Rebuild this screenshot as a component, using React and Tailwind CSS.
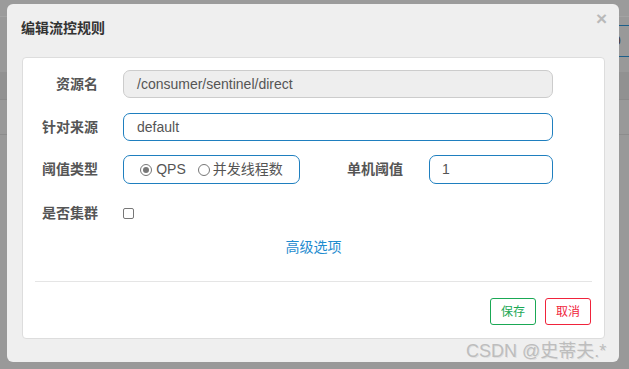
import React from "react";

const font = { fontFamily: '"Liberation Sans", "Noto Sans CJK SC", sans-serif' };

function Label({ children, className = "" }) {
  return (
    <div className={"text-right text-[14px] font-bold text-[#555] " + className}>{children}</div>
  );
}

export default function App() {
  return (
    <div className="relative w-[629px] h-[369px] overflow-hidden bg-[#999999]" style={font}>
      {/* page behind the overlay */}
      <div className="flex flex-col w-full h-full">
        <div className="h-[17px] border-b border-[#a3a3a3] bg-[#9b9b9b]" />
        <div className="h-[55px] flex justify-end">
          <div className="w-[10px] mt-[8px] h-[32px] border-y border-[#1d5f8a] flex items-center">
            <span className="text-[12px] text-[#333] -ml-[5px]">0</span>
          </div>
        </div>
        <div className="h-[28px] bg-[#919191] border-b border-[#8a8a8a]" />
        <div className="h-[35px] border-b border-[#8c8c8c]" />
      </div>

      {/* modal */}
      <div className="absolute left-[7px] top-[4px] w-[612px] h-[358px] rounded-[6px] bg-[#efefef] flex flex-col">
        <div className="h-[48px] flex items-center pl-[14px] mb-[5px]">
          <span className="text-[14px] font-bold text-[#333]">编辑流控规则</span>
        </div>
        <span className="absolute right-[12px] top-[5px] text-[19px] leading-none font-bold text-[#b9b9b9]">×</span>

        <div className="ml-[15px] mr-[14px] h-[282px] bg-white border border-[#dddddd] rounded-[4px] flex flex-col pt-[12px]">
          {/* row 1 */}
          <div className="flex items-center h-[28px]">
            <Label className="w-[75px]">资源名</Label>
            <div className="ml-[25px] w-[430px] h-[28px] rounded-[7px] border border-[#cccccc] bg-[#eeeeee] flex items-center pl-[13px] text-[14px] text-[#555]">
              /consumer/sentinel/direct
            </div>
          </div>
          {/* row 2 */}
          <div className="flex items-center h-[28px] mt-[15px]">
            <Label className="w-[75px]">针对来源</Label>
            <div className="ml-[25px] w-[430px] h-[28px] rounded-[7px] border border-[#1f7fbf] bg-white flex items-center pl-[13px] text-[14px] text-[#555]">
              default
            </div>
          </div>
          {/* row 3 */}
          <div className="flex items-center h-[29px] mt-[14px]">
            <Label className="w-[75px]">阈值类型</Label>
            <div className="ml-[25px] w-[177px] h-[29px] rounded-[7px] border border-[#1f7fbf] bg-white flex items-center justify-center text-[14px] text-[#555]">
              <span className="w-[12px] h-[12px] rounded-full border border-[#777] flex items-center justify-center">
                <span className="w-[6px] h-[6px] rounded-full bg-[#777]" />
              </span>
              <span className="ml-[4px]">QPS</span>
              <span className="ml-[12px] w-[12px] h-[12px] rounded-full border border-[#777]" />
              <span className="ml-[3px]">并发线程数</span>
            </div>
            <Label className="w-[103px]">单机阈值</Label>
            <div className="ml-[26px] w-[124px] h-[29px] rounded-[7px] border border-[#1f7fbf] bg-white flex items-center pl-[12px] text-[14px] text-[#555]">
              1
            </div>
          </div>
          {/* row 4 */}
          <div className="flex items-center h-[28px] mt-[15px]">
            <Label className="w-[75px]">是否集群</Label>
            <span className="ml-[25px] w-[11px] h-[11px] rounded-[2px] border border-[#777] bg-white" />
          </div>
          {/* advanced */}
          <div className="flex justify-center mt-[10px]">
            <span className="text-[14px] text-[#1f8ccf]">高级选项</span>
          </div>
          <div className="mx-[12px] mt-[23px] border-t border-[#e5e5e5]" />
          <div className="flex justify-end gap-[9px] mr-[13px] mt-[16px]">
            <div className="w-[46px] h-[27px] rounded-[3px] border border-[#1aa855] text-[#1aa855] text-[12px] flex items-center justify-center">保存</div>
            <div className="w-[46px] h-[27px] rounded-[3px] border border-[#f0233b] text-[#f0233b] text-[12px] flex items-center justify-center">取消</div>
          </div>
        </div>
      </div>

      <span className="absolute left-[466px] top-[338px] text-[18px] text-[#bdbdbd] [text-shadow:1px_1px_0_rgba(0,0,0,0.08)]">CSDN @史蒂夫.*</span>
    </div>
  );
}
